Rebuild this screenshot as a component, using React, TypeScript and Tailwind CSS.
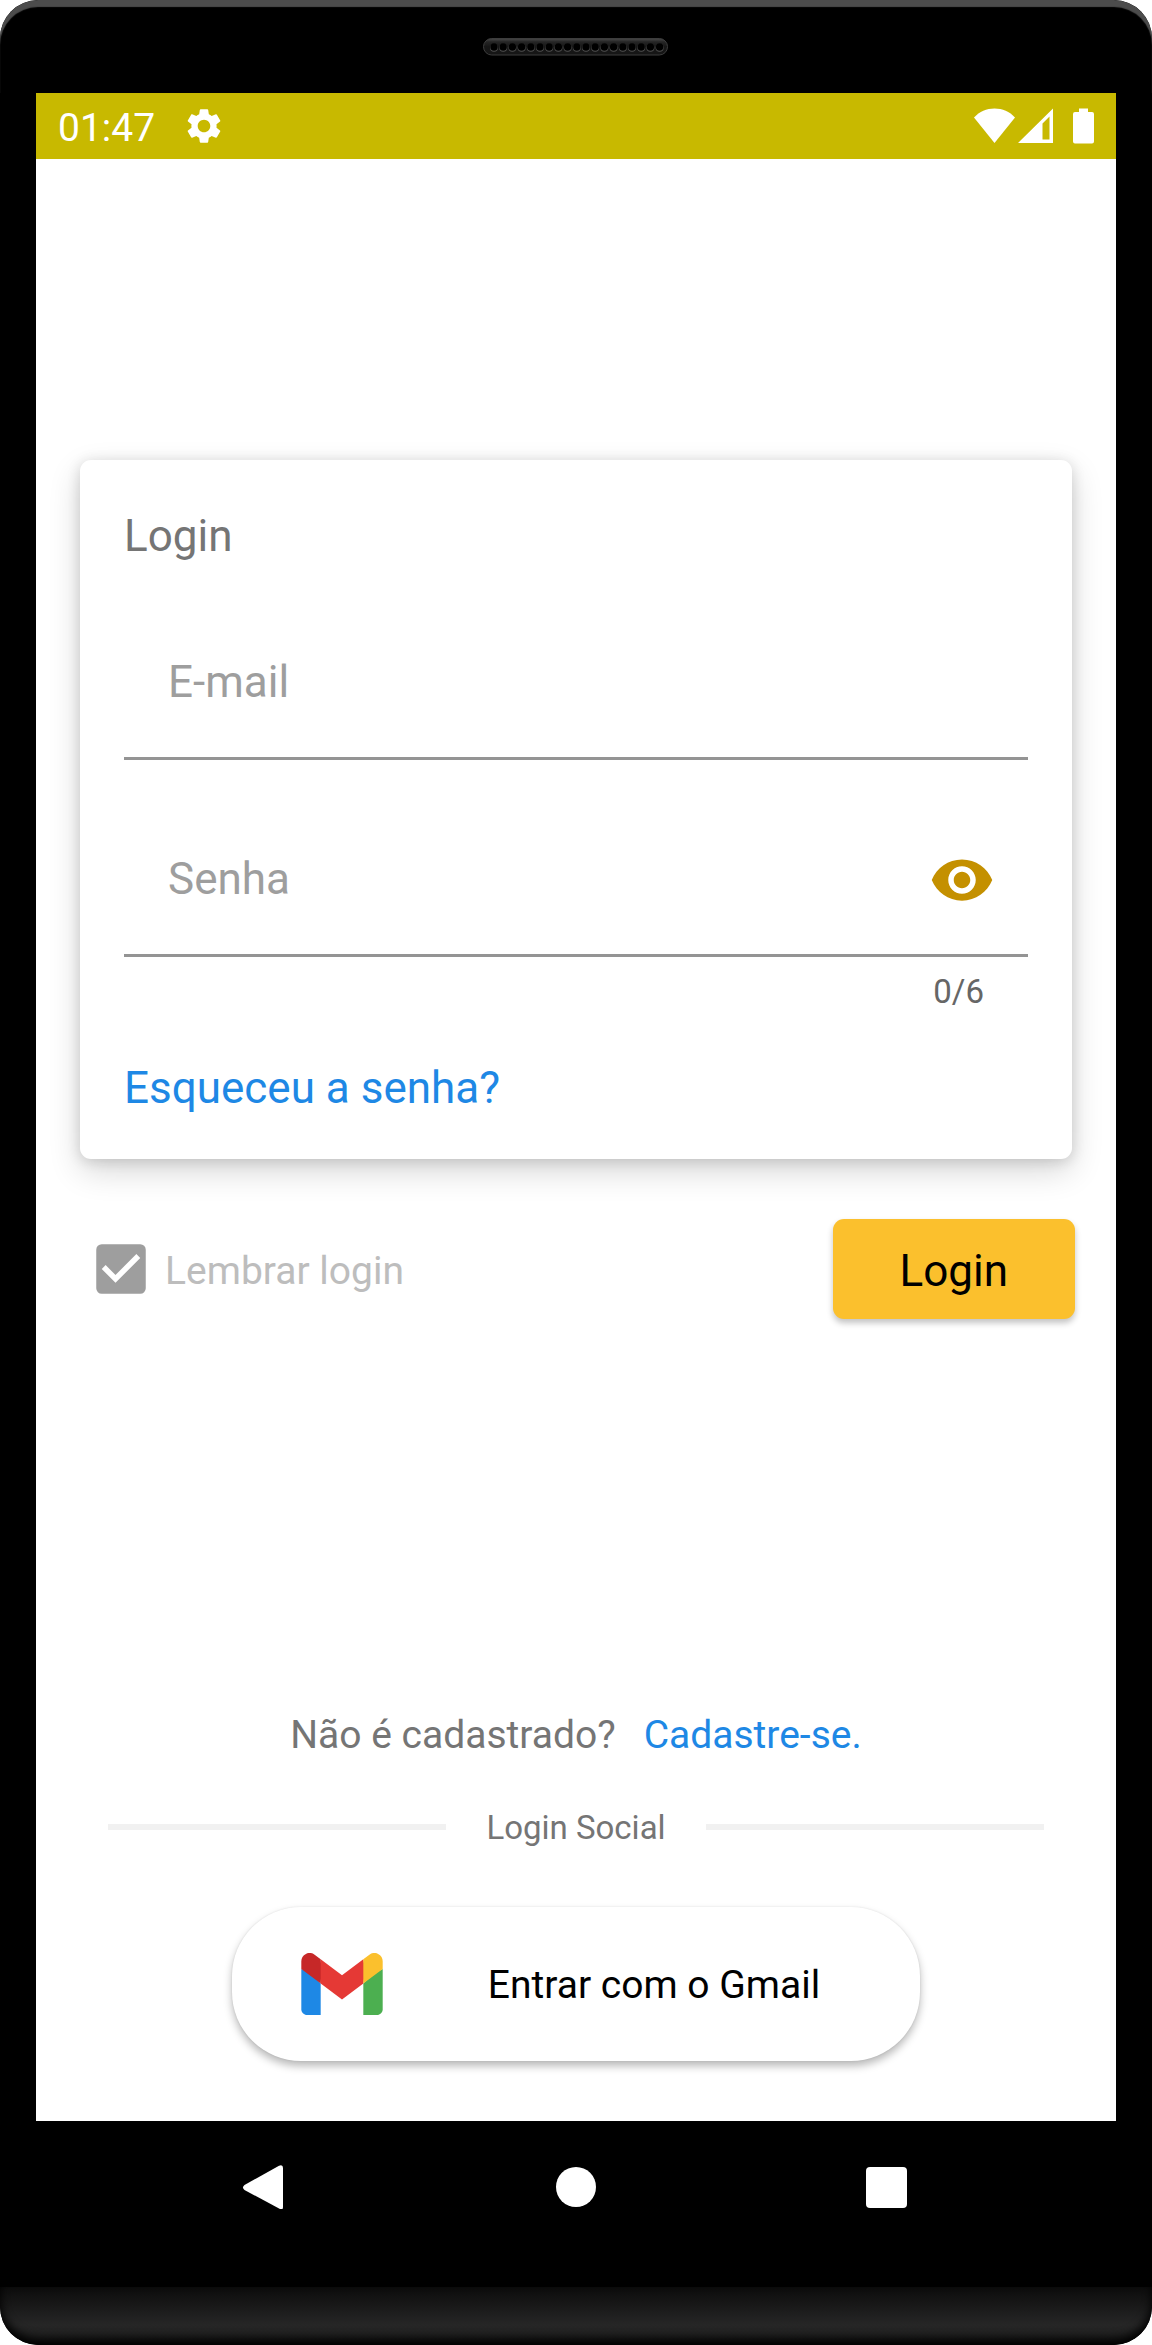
import { useState } from "react";
import {
  MdCheckBox,
  MdCheckBoxOutlineBlank,
  MdSettings,
  MdVisibility,
  MdVisibilityOff,
} from "react-icons/md";

const PASSWORD_LENGTH = 6;
const HOLES = Array.from({ length: 19 }, (_, i) => 11 + i * 9.2);

function Speaker() {
  return (
    <svg width="186" height="18" viewBox="0 0 186 18" aria-hidden="true">
      <defs>
        <linearGradient id="grille" x1="0" y1="0" x2="0" y2="1">
          <stop offset="0" stopColor="#4a4a4a" />
          <stop offset="0.2" stopColor="#262626" />
          <stop offset="0.5" stopColor="#161616" />
          <stop offset="1" stopColor="#161616" />
        </linearGradient>
      </defs>
      <rect x="0.5" y="0.5" width="184" height="16.5" rx="8.2" fill="url(#grille)" stroke="#3d3d3d" />
      {HOLES.map((x) => (
        <g key={x}>
          <circle cx={x} cy="9.8" r="4" fill="#505050" />
          <circle cx={x} cy="9" r="3.7" fill="#000" />
        </g>
      ))}
    </svg>
  );
}

function StatusBar() {
  return (
    <header className="flex h-[66px] items-center justify-between bg-[#c8b900] px-[22px] text-white">
      <div className="flex items-center gap-7">
        <time className="pt-[3px] text-[39px] leading-[48px]">01:47</time>
        <MdSettings className="size-[42px]" aria-hidden="true" />
      </div>
      <div className="flex items-center">
        <svg width="41" height="36" viewBox="0 0 41 36" fill="currentColor" aria-label="Wi-Fi">
          <path d="M20.5 35 0 9.5C5.5 3.5 12.5 0.5 20.5 0.5S35.5 3.5 41 9.5Z" />
        </svg>
        <svg className="ml-[3px]" width="35" height="36" viewBox="0 0 35 36" fill="currentColor" aria-label="Sinal">
          <path fillRule="evenodd" d="M0 35 35 0.5V35ZM24.5 15.5V31.500H31.5V8.5Z" />
        </svg>
        <svg className="ml-5" width="21" height="36" viewBox="0 0 21 36" fill="currentColor" aria-label="Bateria">
          <path d="M6 0.5h9V4h4a2 2 0 0 1 2 2v27.5a2 2 0 0 1-2 2H2a2 2 0 0 1-2-2V6a2 2 0 0 1 2-2h4Z" />
        </svg>
      </div>
    </header>
  );
}

function GmailLogo() {
  return (
    <svg width="82" height="62" viewBox="3 8 42 32" aria-hidden="true">
      <path fill="#4caf50" d="M45 16.2l-5 2.75-5 4.75V40h7c1.657 0 3-1.343 3-3z" />
      <path fill="#1e88e5" d="M3 16.2l3.614 1.71L13 23.7V40H6c-1.657 0-3-1.343-3-3z" />
      <path fill="#e53935" d="M35 11.2 24 19.45 13 11.2 12 17l1 6.7 11 8.25 11-8.25 1-6.7z" />
      <path fill="#c62828" d="M3 12.298V16.2l10 7.5V11.2L9.876 8.859A4.298 4.298 0 0 0 3 12.298z" />
      <path fill="#fbc02d" d="M45 12.298V16.2l-10 7.5V11.2l3.124-2.341A4.298 4.298 0 0 1 45 12.298z" />
    </svg>
  );
}

function LoginCard() {
  const [password, setPassword] = useState("");
  const [visible, setVisible] = useState(false);
  const Eye = visible ? MdVisibilityOff : MdVisibility;

  return (
    <section className="mx-11 mt-[301px] rounded-[11px] bg-white px-11 pt-11 pb-[43px] shadow-[0_12px_32px_rgba(0,0,0,0.16),0_2px_14px_rgba(0,0,0,0.14)]">
      <h1 className="text-[44px] leading-[64px] text-[#757575]">Login</h1>
      <input
        type="email"
        aria-label="E-mail"
        placeholder="E-mail"
        className="mt-[38px] block h-[154px] w-full border-b-3 border-[#949494] bg-transparent px-11 text-[44px] text-black outline-none placeholder:text-[#9e9e9e]"
      />
      <div className="mt-[43px] flex h-[154px] items-center border-b-3 border-[#949494] pl-11 pr-[33px]">
        <input
          type={visible ? "text" : "password"}
          aria-label="Senha"
          placeholder="Senha"
          maxLength={PASSWORD_LENGTH}
          value={password}
          onChange={(e) => setPassword(e.target.value)}
          className="h-full min-w-0 flex-1 bg-transparent text-[44px] text-black outline-none placeholder:text-[#9e9e9e]"
        />
        <button type="button" aria-label="Mostrar senha" className="pt-[3px]" onClick={() => setVisible(!visible)}>
          <Eye className="size-[66px] text-[#c49000]" />
        </button>
      </div>
      <p className="mt-[11px] pr-11 text-right text-[33px] leading-[48px] text-[#666666]">
        {password.length}/{PASSWORD_LENGTH}
      </p>
      <a href="#senha" className="mt-11 block text-[44px] leading-[56px] text-[#1e88e5]">
        Esqueceu a senha?
      </a>
    </section>
  );
}

function RememberLogin() {
  return (
    <label className="flex items-center gap-[11px] text-[39px] leading-[48px] text-[#bdbdbd]">
      <span className="relative size-[66px]">
        <input type="checkbox" defaultChecked disabled className="peer absolute inset-0 appearance-none" />
        <MdCheckBoxOutlineBlank className="size-full text-[#9e9e9e] peer-checked:hidden" />
        <MdCheckBox className="hidden size-full text-[#9e9e9e] peer-checked:block" />
      </span>
      <span className="pt-[3px]">Lembrar login</span>
    </label>
  );
}

function NavigationBar() {
  return (
    <nav className="grid h-[166px] grid-cols-3 justify-items-center px-[72px] pt-11">
      <button type="button" aria-label="Voltar" className="size-11">
        <svg width="44" height="44" viewBox="0 0 44 44" fill="#fff" aria-hidden="true">
          <path d="M2.5 20 37 0.8Q41 -0.8 41 3V42Q41 45.5 37.5 43.8L2.5 25Q-0.5 22.5 2.5 20Z" />
        </svg>
      </button>
      <button type="button" aria-label="Início" className="flex size-11 items-center justify-center">
        <span className="size-10 rounded-full bg-white" />
      </button>
      <button type="button" aria-label="Recentes" className="flex size-11 items-center">
        <span className="size-[41px] rounded-[4px] bg-white" />
      </button>
    </nav>
  );
}

export default function App() {
  return (
    <div className="bg-white font-['Roboto',sans-serif]">
      <div className="overflow-hidden rounded-[38px] bg-black">
        <div className="flex h-[93px] items-center justify-center rounded-t-[38px] shadow-[inset_0_7px_1px_#4c4c4c]">
          <Speaker />
        </div>

        <div className="mx-9">
          <div className="flex flex-col bg-white">
            <StatusBar />
            <main className="flex flex-col pb-[60px]">
              <LoginCard />
              <div className="mt-[60px] flex items-center justify-between pl-[52px] pr-[41px]">
                <RememberLogin />
                <button
                  type="button"
                  className="h-[100px] rounded-[11px] bg-[#fbc02d] px-[67px] pt-[3px] text-[44px] text-black shadow-[0_4px_6px_rgba(0,0,0,0.24)]"
                >
                  Login
                </button>
              </div>

              <p className="mt-[392px] flex justify-center gap-7 text-[39px] leading-[48px] text-[#757575]">
                Não é cadastrado?
                <a href="#cadastro" className="text-[#1e88e5]">
                  Cadastre-se.
                </a>
              </p>

              <div className="mt-11 flex items-center gap-10 px-[72px] text-[33px] leading-[44px] text-[#757575]">
                <span className="h-[6px] flex-1 bg-[#f1f1f1]" />
                <h2 className="pt-[3px]">Login Social</h2>
                <span className="h-[6px] flex-1 bg-[#f1f1f1]" />
              </div>

              <button
                type="button"
                className="mt-[57px] flex h-[154px] items-center gap-[105px] self-center rounded-[69px] bg-white pl-[69px] pr-[100px] text-[39px] text-black shadow-[0_5px_8px_rgba(0,0,0,0.28),0_0_2px_rgba(0,0,0,0.1)]"
              >
                <GmailLogo />
                <span className="pt-[3px]">Entrar com o Gmail</span>
              </button>
            </main>
          </div>
          <NavigationBar />
        </div>

        <div className="h-[58px] rounded-b-[38px] bg-linear-to-b from-[#0c0c0c] via-[#262626] via-65% to-[#1c1c1c] shadow-[inset_0_-6px_10px_#000]" />
      </div>
    </div>
  );
}
